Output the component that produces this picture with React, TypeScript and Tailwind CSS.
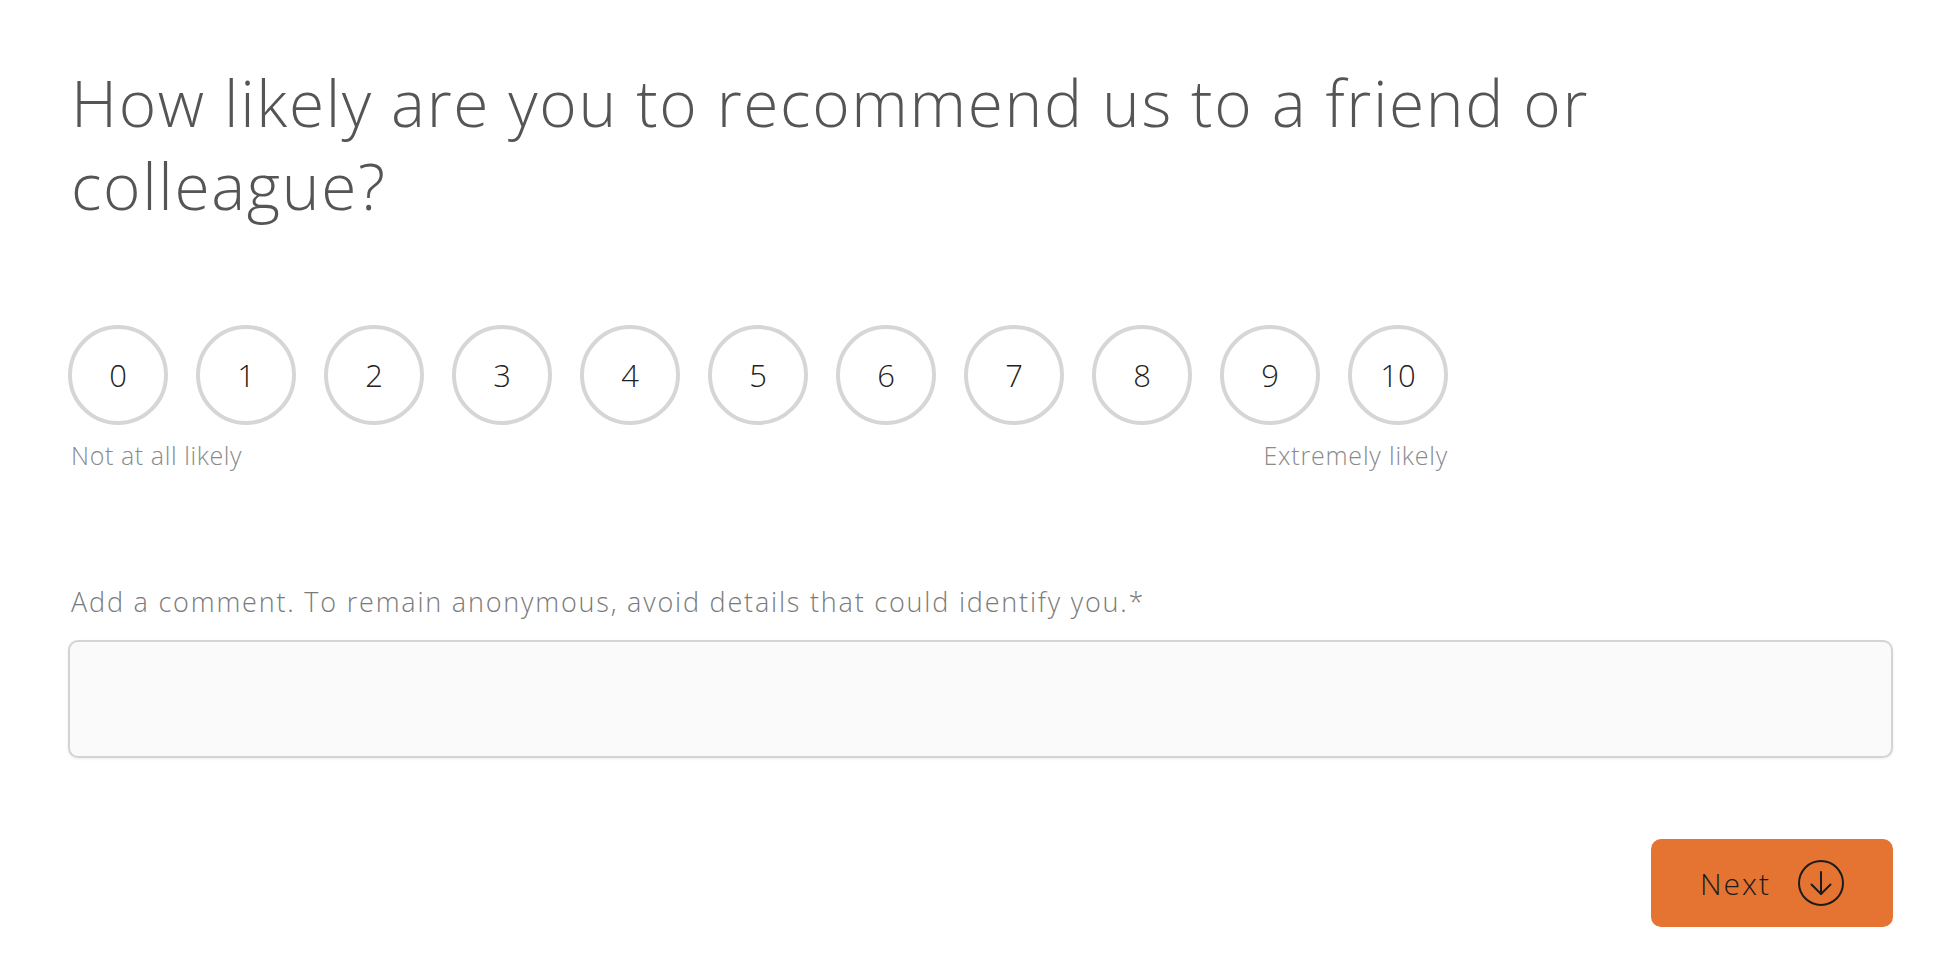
import React from 'react';

const scores = [0, 1, 2, 3, 4, 5, 6, 7, 8, 9, 10];

const NextIcon: React.FC = () => (
  <svg width="46" height="46" viewBox="0 0 46 46" fill="none" stroke="#1c1c1c" strokeWidth="2" strokeLinecap="round" strokeLinejoin="round">
    <circle cx="23" cy="23" r="22" />
    <path d="M23 12v22" />
    <path d="M13.5 24.5 23 34l9.5-9.5" />
  </svg>
);

const App: React.FC = () => {
  return (
    <div className="min-h-screen bg-white font-['Open_Sans',sans-serif] font-light">
      <div className="pl-[68px] pr-[59px] pt-[61px]">
        {/* Question */}
        <h1 className="max-w-[1660px] pl-[3px] text-[64px] leading-[83px] tracking-[1.65px] text-[#555555]">
          How likely are you to recommend us to a friend or colleague?
        </h1>

        {/* Scale */}
        <div className="mt-[98px] w-fit">
          <div className="flex gap-[28px]">
            {scores.map((n) => (
              <button
                key={n}
                className="flex h-[100px] w-[100px] items-center justify-center rounded-full border-[4px] border-[#d6d6d6] bg-white text-[31px] leading-none text-[#222222]"
              >
                {n}
              </button>
            ))}
          </div>
          <div className="mt-[15px] flex justify-between text-[25px] leading-[30px] text-[#8a8a8a]">
            <span className="pl-[3px] tracking-[0.6px]">Not at all likely</span>
            <span className="tracking-[0.8px]">Extremely likely</span>
          </div>
        </div>

        {/* Comment */}
        <div className="mt-[115px]">
          <label className="block pl-[3px] text-[27px] leading-[34px] tracking-[1.8px] text-[#7a7a7a]">
            Add a comment. To remain anonymous, avoid details that could identify you.*
          </label>
          <textarea className="mt-[21px] block h-[118px] w-full resize-none rounded-[10px] border-2 border-[#d4d4d4] bg-[#fafafa] shadow-[0_1px_3px_rgba(0,0,0,0.08)] outline-none" />
        </div>

        {/* Next */}
        <div className="mt-[81px] flex justify-end">
          <button className="flex h-[88px] w-[242px] items-center justify-center gap-[27px] rounded-[10px] bg-[#e57432] text-[30px] leading-none tracking-[2px] text-[#1c1c1c]">
            <span className="pt-[2px]">Next</span>
            <NextIcon />
          </button>
        </div>
      </div>
    </div>
  );
};

export default App;
